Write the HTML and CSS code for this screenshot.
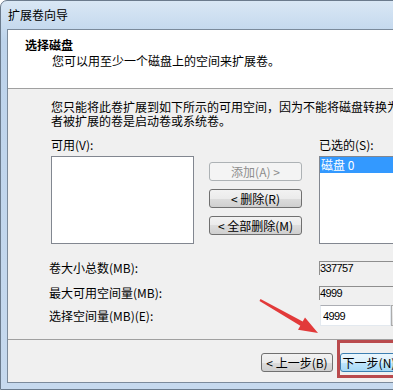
FILE: index.html
```html
<!DOCTYPE html>
<html lang="zh-CN">
<head>
    <meta charset="UTF-8">
    <meta name="viewport" content="width=device-width, initial-scale=1.0">
    <title>扩展卷向导</title>
    <link rel="stylesheet" href="styles.css">
</head>
<body>

    <div class="window">
        <div class="titlebar">扩展卷向导</div>

        <div class="client">
            <div class="header">
                <div class="header-title">选择磁盘</div>
                <div class="header-sub">您可以用至少一个磁盘上的空间来扩展卷。</div>
            </div>

            <div class="content">
                <p class="intro">您只能将此卷扩展到如下所示的可用空间，因为不能将磁盘转换为动态磁盘，或<br>者被扩展的卷是启动卷或系统卷。</p>

                <div class="picker">
                    <div class="lbl">可用(V):</div>
                    <div></div>
                    <div class="lbl">已选的(S):</div>

                    <div class="listbox"></div>
                    <div class="move-btns">
                        <button class="btn" disabled>添加(A) &gt;</button>
                        <button class="btn">&lt; 删除(R)</button>
                        <button class="btn">&lt; 全部删除(M)</button>
                    </div>
                    <div class="listbox">
                        <div class="item selected">磁盘 0</div>
                    </div>
                </div>

                <div class="sizes">
                    <div class="size-row row-total">
                        <span>卷大小总数(MB):</span>
                        <span class="readonly">337757</span>
                    </div>
                    <div class="size-row row-max">
                        <span>最大可用空间量(MB):</span>
                        <span class="readonly">4999</span>
                    </div>
                    <div class="size-row row-pick">
                        <span>选择空间量(MB)(E):</span>
                        <span class="spin-field">
                            <input class="edit" type="text" value="4999">
                            <span class="spin"></span>
                        </span>
                    </div>
                </div>
            </div>

            <div class="footer">
                <button class="btn btn-back">&lt; 上一步(B)</button>
                <button class="btn btn-next">下一步(N)</button>
                <button class="btn btn-cancel">取消</button>
            </div>
        </div>

        <!-- annotation drawn over the dialog -->
        <svg class="arrow" width="70" height="45" viewBox="0 0 70 45">
            <polygon points="5.5,4.1 47.7,26.4 50,22.5 63,38 43,34.7 45.3,30.8 4.5,5.9" />
        </svg>
        <div class="mark"></div>
    </div>

</body>
</html>
```

FILE: styles.css
```css
body {
    margin: 0;
    overflow: hidden;
    font-family: "Noto Sans CJK SC", sans-serif;
    font-size: 12px;
    color: #000;
}

.window {
    position: relative;
    width: 520px;
    height: 390px;
    box-sizing: border-box;
    border: 1px solid #6b7b8d;
    border-radius: 7px 7px 0 0;
    padding: 0 6px 6px;
    background: linear-gradient(to bottom, #d9e7f5, #bdd3eb 40px, #c6d9ee);
    display: flex;
    flex-direction: column;
}

.titlebar {
    height: 28px;
    line-height: 28px;
    padding-left: 1px;
}

.client {
    flex: 1;
    border: 1px solid #7b8a9b;
    background: #f0f0f0;
    display: flex;
    flex-direction: column;
}

.header {
    height: 59px;
    box-sizing: border-box;
    background: #fff;
    border-bottom: 1px solid #a0a0a0;
    padding: 8px 0 0 17px;
    line-height: 14px;
}
.header-title {
    font-weight: bold;
}
.header-sub {
    margin: 2px 0 0 27px;
}

.content {
    padding: 11px 0 0 43px;
}

.intro {
    margin: 0;
    line-height: 14px;
    white-space: nowrap;
}

.picker {
    margin-top: 10px;
    display: grid;
    grid-template-columns: 143px 95px 143px;
    column-gap: 15px;
    row-gap: 4px;
}
.lbl {
    line-height: 14px;
}

.listbox {
    height: 88px;
    box-sizing: border-box;
    border: 1px solid #828790;
    background: #fff;
}
.item {
    height: 16px;
    line-height: 16px;
    padding-left: 1px;
}
.item.selected {
    background: #3399ff;
    color: #fff;
}

.move-btns {
    padding-top: 6px;
    display: flex;
    flex-direction: column;
    gap: 8px;
}

.btn {
    height: 19px;
    width: 93px;
    padding: 0;
    font-family: inherit;
    font-size: 12px;
    line-height: 17px;
    color: #000;
    border: 1px solid #707070;
    border-radius: 3px;
    background: linear-gradient(to bottom, #f2f2f2 0, #ebebeb 50%, #dddddd 50%, #cfcfcf 100%);
}
.btn:disabled {
    color: #8d8d8d;
    border-color: #adb2b5;
    background: #f4f4f4;
}

.sizes {
    margin: 15px 0 0 -2px;
}
.size-row {
    display: grid;
    grid-template-columns: 270px auto;
    align-items: center;
}
.row-max {
    margin-top: 8px;
}
.row-pick {
    margin-top: 4px;
}

.readonly {
    height: 14px;
    width: 120px;
    box-sizing: border-box;
    border-top: 1px solid #8e8e8e;
    border-left: 1px solid #8e8e8e;
    background: #f0f0f0;
    font-family: "Liberation Sans", sans-serif;
    font-size: 11px;
    line-height: 13px;
    letter-spacing: -0.6px;
}

.spin-field {
    display: flex;
}
.edit {
    width: 71px;
    height: 21px;
    box-sizing: border-box;
    margin: 0 0 0 1px;
    padding: 0 0 0 2px;
    border: 1px solid #e3e9ef;
    border-top-color: #abadb3;
    background: #fff;
    font-family: "Liberation Sans", sans-serif;
    font-size: 11px;
    letter-spacing: -0.6px;
    outline: none;
}
.spin {
    width: 16px;
    height: 21px;
    box-sizing: border-box;
    border: 1px solid #acacac;
    background: linear-gradient(to bottom, #f2f2f2, #dcdcdc);
}

.footer {
    margin-top: auto;
    height: 43px;
    box-sizing: border-box;
    border-top: 1px solid #a0a0a0;
    padding: 13px 11px 0 0;
    display: flex;
    justify-content: flex-end;
    gap: 7px;
}
.btn-back {
    width: 72px;
}
.btn-next {
    width: 58px;
    border-color: #3c7fb1;
    background: linear-gradient(to bottom, #eaf6fd 0, #d9f0fc 50%, #bee6fd 50%, #a7d9f5 100%);
}
.btn-cancel {
    width: 75px;
    margin-left: 21px;
}

.arrow {
    position: absolute;
    left: 254px;
    top: 294px;
}
.arrow polygon {
    fill: #e23a3a;
}

.mark {
    position: absolute;
    left: 336px;
    top: 339px;
    width: 72px;
    height: 38px;
    box-sizing: border-box;
    border: 3px solid #b94a4d;
}
```
